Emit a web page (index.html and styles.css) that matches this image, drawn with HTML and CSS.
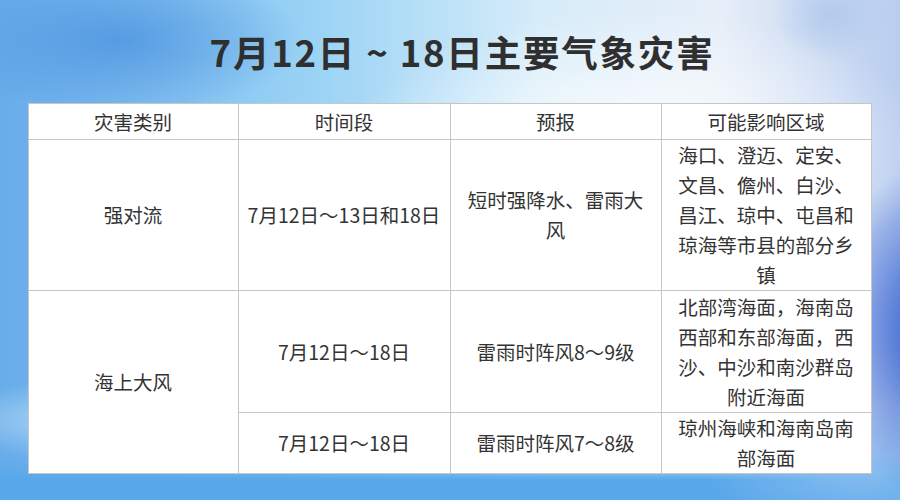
FILE: index.html
```html
<!DOCTYPE html>
<html lang="zh-CN">
<head>
<meta charset="utf-8">
<title>7月12日～18日主要气象灾害</title>
<link rel="stylesheet" href="styles.css">
</head>
<body>
<div class="page">
  <h1 class="title">7月12日 ~ 18日主要气象灾害</h1>
  <table class="grid">
    <colgroup>
      <col class="c1"><col class="c2"><col class="c3"><col class="c4">
    </colgroup>
    <thead>
      <tr class="head">
        <th>灾害类别</th>
        <th>时间段</th>
        <th>预报</th>
        <th>可能影响区域</th>
      </tr>
    </thead>
    <tbody>
      <tr class="r1">
        <td>强对流</td>
        <td class="tight">7月12日～13日和18日</td>
        <td class="wrap">短时强降水、雷雨大风</td>
        <td class="wrap">海口、澄迈、定安、文昌、儋州、白沙、昌江、琼中、屯昌和琼海等市县的部分乡镇</td>
      </tr>
      <tr class="r2">
        <td rowspan="2">海上大风</td>
        <td class="tight">7月12日～18日</td>
        <td class="wrap">雷雨时阵风8～9级</td>
        <td class="wrap">北部湾海面，海南岛西部和东部海面，西沙、中沙和南沙群岛附近海面</td>
      </tr>
      <tr class="r3">
        <td class="tight">7月12日～18日</td>
        <td class="wrap">雷雨时阵风7～8级</td>
        <td class="wrap">琼州海峡和海南岛南部海面</td>
      </tr>
    </tbody>
  </table>
</div>
</body>
</html>
```

FILE: styles.css
```css
html, body {
  margin: 0;
  padding: 0;
}

body {
  width: 900px;
  height: 500px;
  overflow: hidden;
  font-family: "Noto Sans CJK SC", "Noto Sans", sans-serif;
  color: #333;
  background:
    radial-gradient(ellipse 260px 110px at 120px 40px, rgba(78,148,224,0.8), rgba(78,148,224,0) 70%),
    radial-gradient(ellipse 75px 60px at 830px 15px, rgba(175,200,235,0.85), rgba(175,200,235,0) 75%),
    radial-gradient(ellipse 420px 200px at 640px 150px, rgba(255,255,255,0.95), rgba(255,255,255,0) 70%),
    radial-gradient(ellipse 140px 210px at 935px 330px, rgba(40,85,205,1), rgba(40,85,205,0) 80%),
    radial-gradient(ellipse 220px 90px at 860px 470px, rgba(140,190,240,0.9), rgba(140,190,240,0) 70%),
    linear-gradient(180deg, rgba(88,168,234,0) 455px, rgba(88,168,234,1) 480px),
    radial-gradient(ellipse 160px 50px at 60px 420px, rgba(175,215,245,0.8), rgba(175,215,245,0) 75%),
    linear-gradient(90deg, #68acea 0%, #9ad3f5 35%, #d6ecf9 60%, #e6eef8 80%, #b9cdef 100%);
}

.page {
  display: flex;
  flex-direction: column;
  align-items: center;
}

.title {
  margin: 0;
  padding-left: 24px;
  height: 103px;
  line-height: 104px;
  font-size: 36.5px;
  font-weight: 700;
  color: #2f2f2f;
  letter-spacing: 1.8px;
}

.grid {
  border-collapse: collapse;
  table-layout: fixed;
  width: 843px;
  margin-left: -1px;
  background: #fff;
  font-size: 19.5px;
  line-height: 30px;
  color: #333;
}

.c1 { width: 210px; }
.c2 { width: 212px; }
.c3 { width: 211px; }
.c4 { width: 210px; }

.grid th,
.grid td {
  border: 1px solid #c6c6c6;
  padding: 0 4px;
  text-align: center;
  vertical-align: middle;
  font-weight: 400;
}

.grid td.tight {
  padding: 0 2px;
  white-space: nowrap;
}

.grid td.wrap {
  padding: 0 11px;
}

.head { height: 36px; }
.r1 { height: 151px; }
.r2 { height: 122px; }
.r3 { height: 60px; }
```
